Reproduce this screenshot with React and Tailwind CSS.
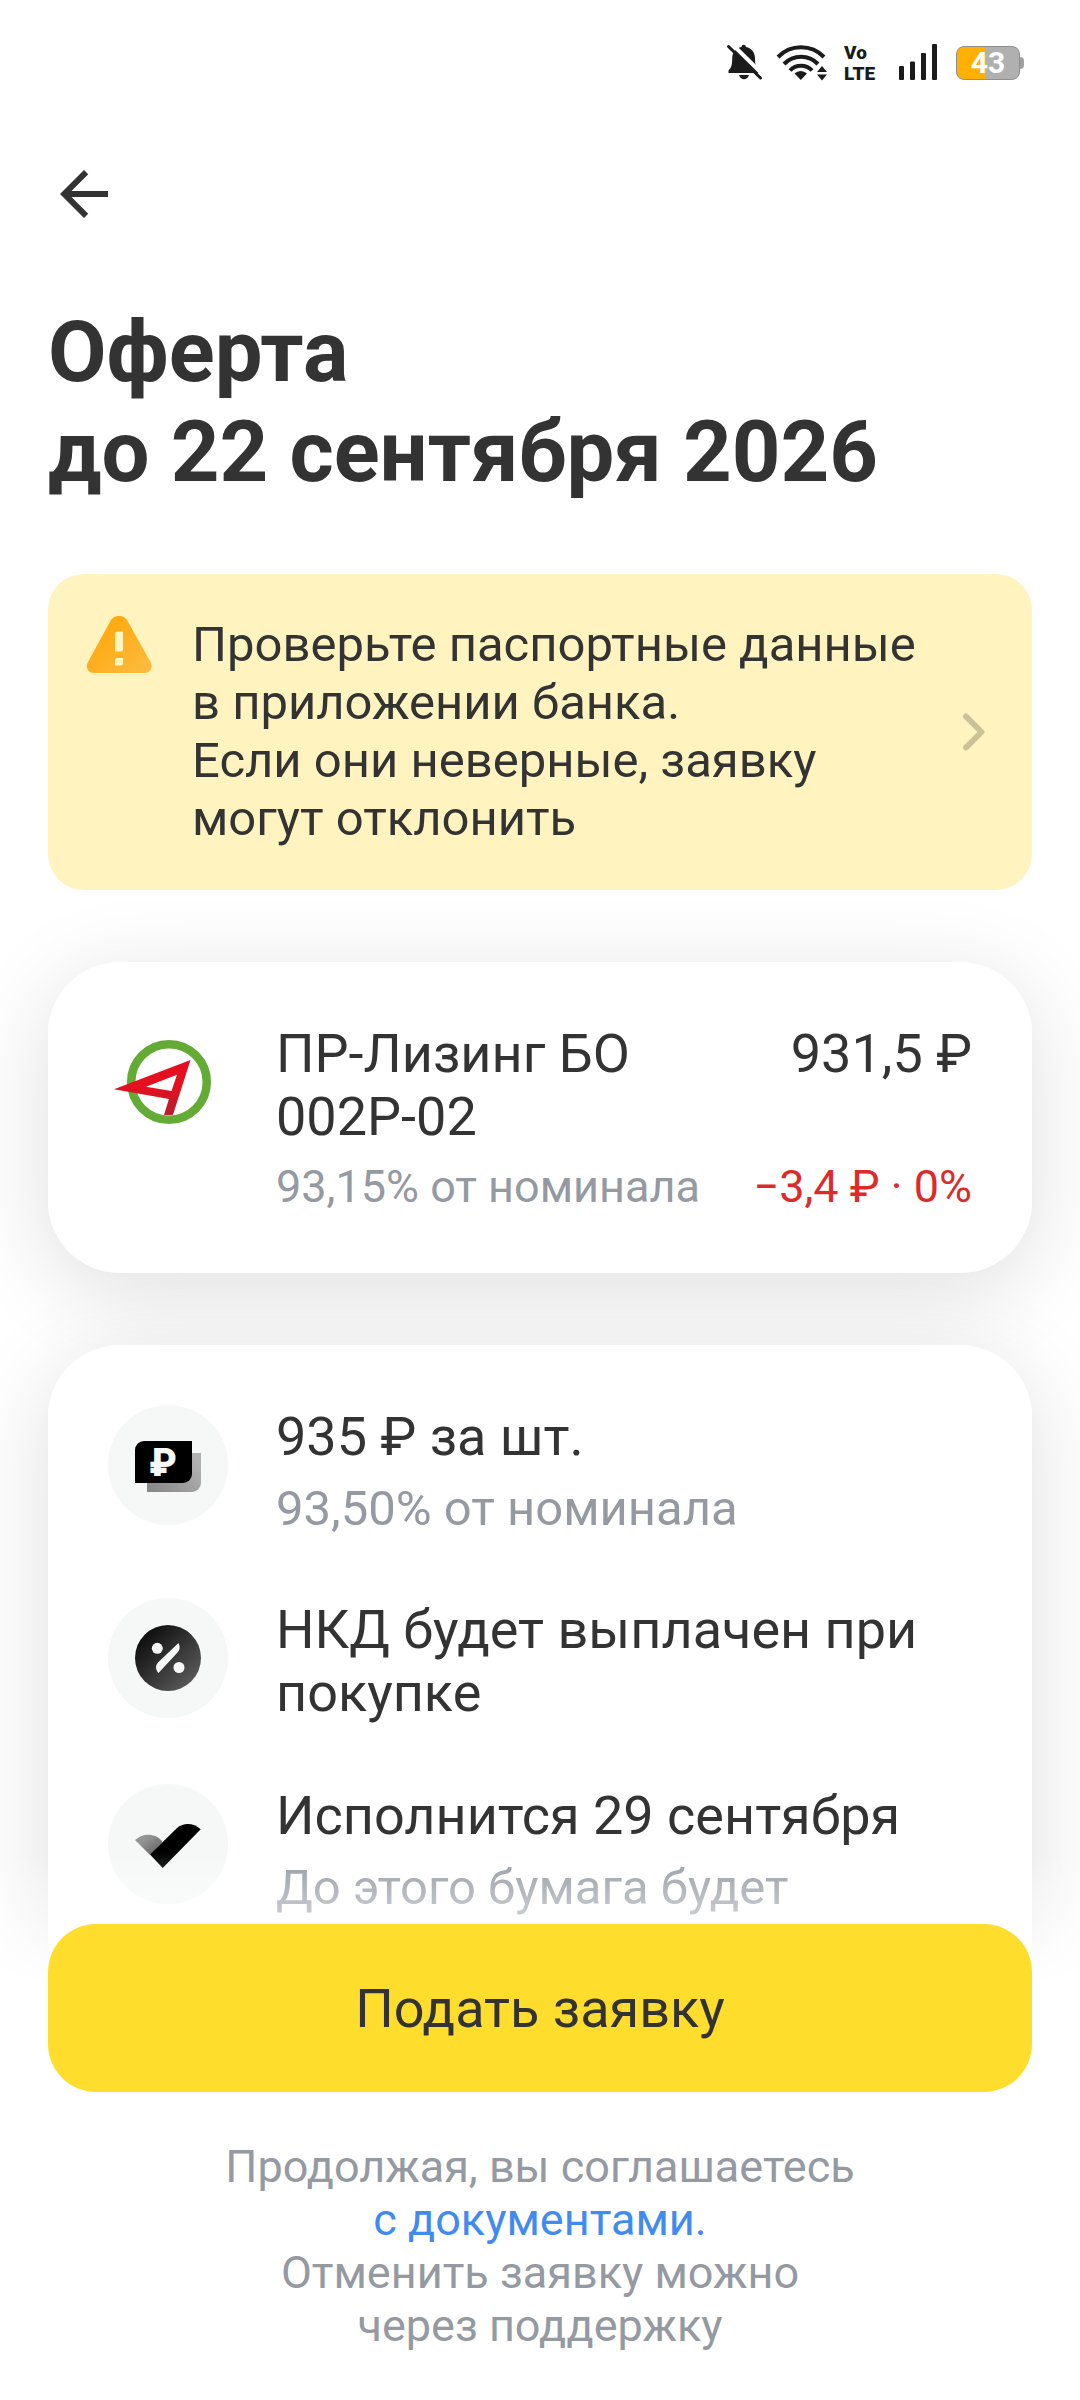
const BellOffIcon = () => (
  <svg viewBox="0 0 40 40" className="h-10 w-10" fill="#1b1b1b">
    <path d="M17.500 4a2.200 2.200 0 0 1 4.400 0C28 5 31 10 31 15.500c0 6 1 9 4 12V30H4.500v-2.500c3-3 3.700-6 3.700-12C8.200 10 11.500 5 17.500 4z" />
    <path d="M15 32h10c-1 3-3 4.300-5 4.300S16 35 15 32z" />
    <path d="M6 -1l34 33.500" stroke="#fff" strokeWidth="4" />
    <path d="M4.500 3.500l32 31.500" stroke="#1b1b1b" strokeWidth="3" strokeLinecap="round" />
  </svg>
);

const WifiIcon = () => (
  <svg viewBox="0 0 52 40" className="h-10 w-[52px]" fill="none" stroke="#1b1b1b" strokeWidth="4">
    <path d="M2 14a32 32 0 0 1 46 0" />
    <path d="M8 21a23.500 23.500 0 0 1 34 0" />
    <path d="M14 27.500a15 15 0 0 1 22 0" />
    <path d="M18.500 30.500a9 9 0 0 1 12.500 0l-6.200 6.500z" fill="#1b1b1b" stroke="none" />
    <path d="M41 29h10l-5-6zM41 31.500h10l-5 6z" fill="#1b1b1b" stroke="none" />
  </svg>
);

const SignalIcon = () => (
  <svg viewBox="0 0 52 40" className="h-10 w-[52px]" fill="#1b1b1b">
    <rect x="7" y="23" width="5" height="14" rx="1" />
    <rect x="18" y="18.500" width="5" height="18.500" rx="1" />
    <rect x="29" y="10" width="5" height="27" rx="1" />
    <rect x="40" y="1" width="5" height="36" rx="1" />
  </svg>
);

const Battery = () => (
  <div className="flex items-center">
    <div className="flex h-[34px] w-16 items-center justify-center rounded-lg border border-[#8f8f8f] bg-linear-to-r from-[#ffb000] from-45% to-[#b0b0b0] to-45%">
      <span className="text-[30px] leading-8 font-bold text-white">43</span>
    </div>
    <div className="h-3 w-1 rounded-r bg-[#a0a0a0]" />
  </div>
);

const StatusBar = () => (
  <div className="flex h-[126px] shrink-0 items-center justify-end gap-3 pr-14">
    <BellOffIcon />
    <WifiIcon />
    <p className="w-10 pl-1 text-[19px] leading-[21px] font-black text-[#1b1b1b]">
      Vo
      <br />
      LTE
    </p>
    <SignalIcon />
    <Battery />
  </div>
);

const WarningIcon = () => (
  <svg viewBox="0 0 66 58" className="h-[58px] w-[66px] shrink-0">
    <defs>
      <linearGradient id="warn" x1="0" y1="0" x2="1" y2="1">
        <stop offset="0.3" stopColor="#ffab13" />
        <stop offset="1" stopColor="#fbbc43" />
      </linearGradient>
    </defs>
    <path
      d="M25 4c3.500-5.500 12.500-5.500 16 0l23.500 42c3 5.500 0 11-6 11H8c-6 0-9-5.500-6-11z"
      fill="url(#warn)"
    />
    <path d="M31.500 15.500H37V33a2.500 2.500 0 0 1-2.500 2.500H29V18a2.500 2.500 0 0 1 2.500-2.500z" fill="#fff5c0" />
    <path d="M31.500 42H37v5a2.500 2.500 0 0 1-2.500 2.500H29v-5a2.500 2.500 0 0 1 2.500-2.500z" fill="#fff5c0" />
  </svg>
);

const IssuerLogo = () => (
  <svg viewBox="0 0 120 120" className="h-[120px] w-[120px] shrink-0">
    <defs>
      <linearGradient id="needle" x1="0" y1="0" x2="0" y2="1">
        <stop offset="0.5" stopColor="#e5101f" />
        <stop offset="1" stopColor="#b3202e" />
      </linearGradient>
    </defs>
    <circle cx="61" cy="60" r="37.800" fill="none" stroke="#64ab35" strokeWidth="8.500" />
    <path
      d="M6 67.300L82.500 38L65 92.700q-4.500.8-9 0L61 77zM38 64.700L63.500 69L69 52.700z"
      fill="url(#needle)"
      fillRule="evenodd"
    />
  </svg>
);

const RubleIcon = () => (
  <svg viewBox="0 0 66 66" className="h-[66px] w-[66px]">
    <defs>
      <linearGradient id="note" x1="0" y1="1" x2="1" y2="0.300">
        <stop offset="0" stopColor="#858585" />
        <stop offset="1" stopColor="#b2b2b2" />
      </linearGradient>
    </defs>
    <path d="M12 21h54v30a9 9 0 0 1-9 9H12z" fill="url(#note)" />
    <path d="M9 9h48v33a9 9 0 0 1-9 9H0V18a9 9 0 0 1 9-9z" fill="#000" />
    <text x="28" y="44" textAnchor="middle" fontSize="38" fontWeight="900" fill="#f6f8f7">
      ₽
    </text>
  </svg>
);

const PercentIcon = () => (
  <svg viewBox="0 0 66 66" className="h-[66px] w-[66px]">
    <defs>
      <linearGradient id="coin" x1="0.100" y1="0.100" x2="0.900" y2="0.900">
        <stop offset="0" stopColor="#0a0a0a" />
        <stop offset="1" stopColor="#5c5c5c" />
      </linearGradient>
    </defs>
    <circle cx="33" cy="33" r="33" fill="url(#coin)" />
    <circle cx="22.300" cy="23.300" r="5.500" fill="#f6f8f7" />
    <circle cx="44" cy="42.500" r="5.500" fill="#f6f8f7" />
    <path d="M43.500 18c1.800 3.500 1.500 7-1 9.500L23.500 48c-3.200-3.500-3.200-7.500-.5-10.500z" fill="#f6f8f7" />
  </svg>
);

const CheckIcon = () => (
  <svg viewBox="0 0 66 66" className="h-[66px] w-[66px]">
    <defs>
      <linearGradient id="tail" x1="0" y1="0" x2="1" y2="1">
        <stop offset="0.300" stopColor="#949494" />
        <stop offset="1" stopColor="#5a5a5a" />
      </linearGradient>
    </defs>
    <path d="M0 29C5 25 9 23.700 13 23.700C19 23.700 24 26 27.500 31L15 44z" fill="url(#tail)" />
    <path d="M15 43.500L42 17C49 11 59 12 65.700 18.300L27.700 57z" fill="#000" />
  </svg>
);

const Card = ({ children, className = 'pb-[60px]' }) => (
  <section
    className={`relative flex flex-col gap-[60px] rounded-[72px] bg-white px-[60px] pt-[60px] before:absolute before:inset-0 before:-z-10 before:rounded-[72px] before:shadow-[0_18px_90px_rgba(0,0,0,0.13)] ${className}`}
  >
    {children}
  </section>
);

const DetailRow = ({ icon, title, note }) => (
  <div className="flex gap-12">
    <div className="flex h-[120px] w-[120px] shrink-0 items-center justify-center rounded-full bg-[#f6f8f7]">
      {icon}
    </div>
    <div className="flex flex-col gap-3">
      <p className="text-[54px] leading-[63px]">{title}</p>
      {note && <p className="text-[49px] leading-[58px] text-[#9499a2]">{note}</p>}
    </div>
  </div>
);

const App = () => {
  return (
    <div className="flex h-screen flex-col bg-white font-[Roboto,sans-serif] text-[#333333]">
      <StatusBar />

      <main className="isolate min-h-0 flex-1 overflow-y-auto px-12 pt-8 [scrollbar-width:none]">
        <button type="button" aria-label="Назад" className="block">
          <svg viewBox="0 0 24 24" className="h-[72px] w-[72px]" fill="currentColor">
            <path d="M20 11H7.830l5.590-5.590L12 4l-8 8 8 8 1.410-1.410L7.830 13H20z" />
          </svg>
        </button>

        <h1 className="mt-[72px] text-[85px] leading-[100px] font-bold">
          Оферта
          <br />
          до 22 сентября 2026
        </h1>

        <a href="#passport" className="mt-[72px] flex items-start gap-10 rounded-[36px] bg-[#fff4c0] px-[38px] py-[42px]">
          <WarningIcon />
          <p className="flex-1 text-[49px] leading-[58px]">
            Проверьте паспортные данные
            <br />
            в приложении банка.
            <br />
            Если они неверные, заявку
            <br />
            могут отклонить
          </p>
          <svg viewBox="0 0 24 40" className="mr-2 h-10 w-6 self-center" fill="none">
            <path d="M4 4.500l15.500 15.500L4 35.500" stroke="#ccc29a" strokeWidth="6" strokeLinecap="round" strokeLinejoin="round" />
          </svg>
        </a>

        <div className="mt-[72px] flex flex-col gap-[72px] pb-12">
          <Card>
            <div className="flex gap-12">
              <IssuerLogo />
              <div className="flex flex-1 flex-col gap-3">
                <div className="flex justify-between gap-12 text-[54px] leading-[63px]">
                  <p>
                    ПР-Лизинг БО
                    <br />
                    002Р-02
                  </p>
                  <p className="whitespace-nowrap">931,5 ₽</p>
                </div>
                <div className="flex justify-between text-[45px] leading-[53px] whitespace-nowrap">
                  <p className="text-[#9499a2]">93,15% от номинала</p>
                  <p className="text-[#dd2b2b]">−3,4 ₽ · 0%</p>
                </div>
              </div>
            </div>
          </Card>

          <Card className="pb-[180px]">
            <DetailRow icon={<RubleIcon />} title="935 ₽ за шт." note="93,50% от номинала" />
            <DetailRow icon={<PercentIcon />} title="НКД будет выплачен при покупке" />
            <DetailRow icon={<CheckIcon />} title="Исполнится 29 сентября" note="До этого бумага будет" />
          </Card>
        </div>
      </main>

      {/* нижняя панель, контент уходит под неё с затуханием */}
      <footer className="relative -mt-36 bg-linear-to-b from-white/0 to-white to-[130px] px-12 pt-[72px] pb-12 text-center">
        <button type="button" className="h-[168px] w-full rounded-[48px] bg-[#ffdd2d] text-[54px] leading-[63px]">
          Подать заявку
        </button>
        <p className="mt-12 text-[45px] leading-[53px] text-[#9499a2]">
          Продолжая, вы соглашаетесь
          <br />
          <a href="#documents" className="text-[#428bee]">
            с документами.
          </a>
          <br />
          Отменить заявку можно
          <br />
          через поддержку
        </p>
      </footer>
    </div>
  );
};

export default App;
